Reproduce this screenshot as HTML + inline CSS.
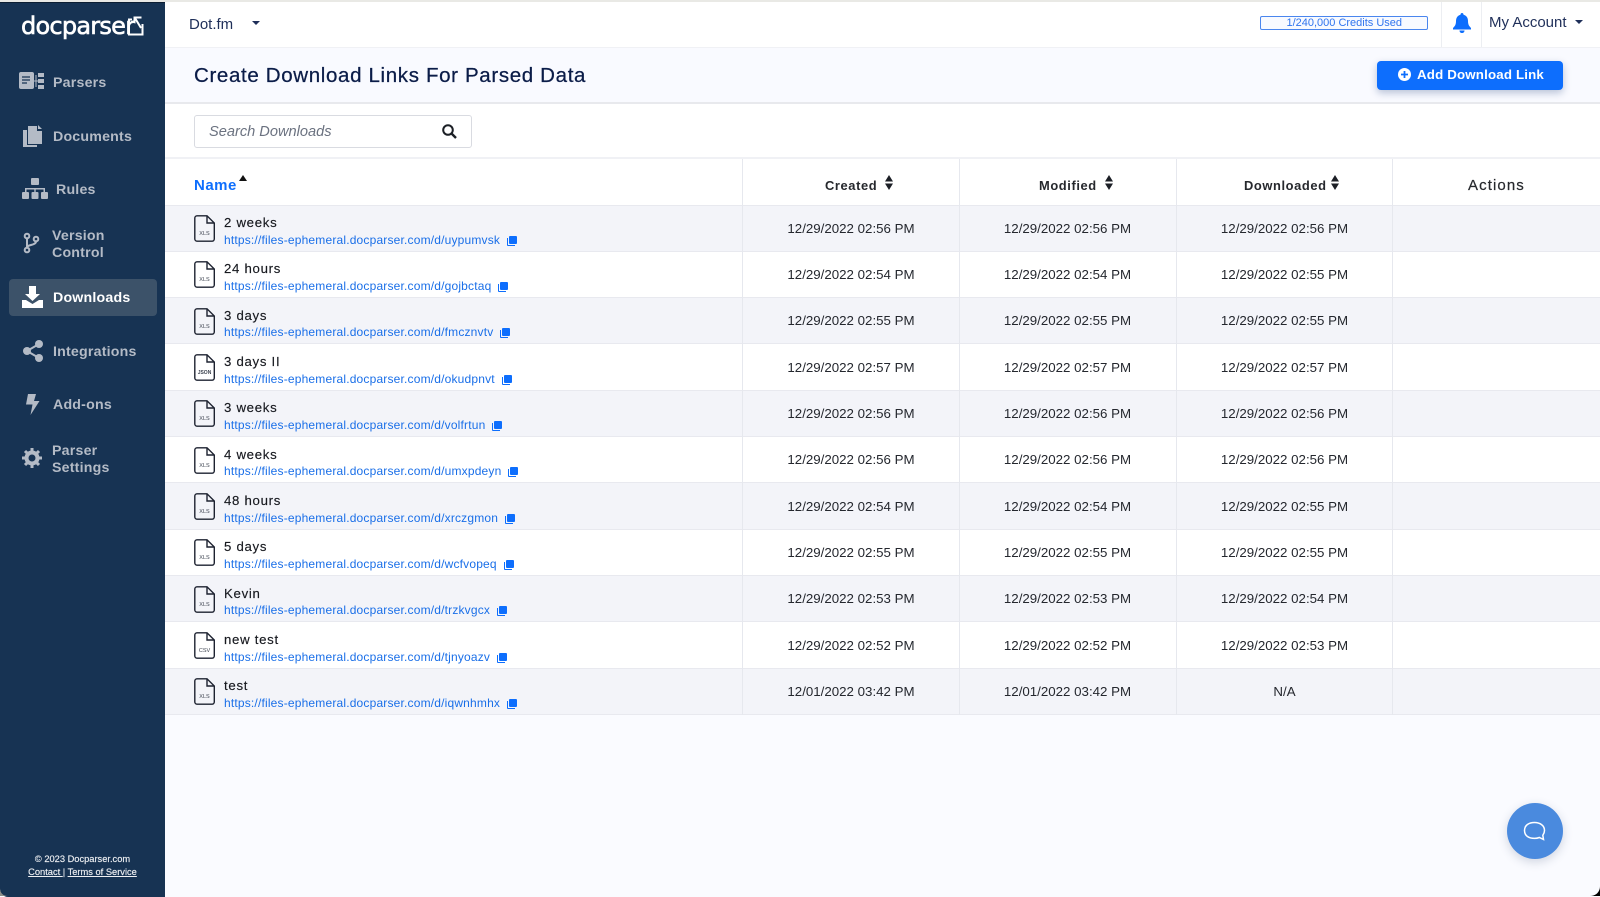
<!DOCTYPE html>
<html><head><meta charset="utf-8"><title>Docparser</title>
<style>
*{box-sizing:border-box}
html,body{margin:0;padding:0;width:1600px;height:896px;overflow:hidden;background:#fafbff;font-family:"Liberation Sans",sans-serif}
.a{position:absolute}
#strip{left:0;top:0;width:1600px;height:2px;background:#e9e9e5}
#side{left:0;top:1.5px;width:165px;height:895px;background:#173353;border-top:1px solid #0d1f33;border-bottom-left-radius:8px}
#top{left:165px;top:2px;width:1435px;height:46px;background:#fff;border-bottom:1px solid #f0f1f5}
#band{left:165px;top:48px;width:1435px;height:56px;background:#f9faff;border-bottom:2px solid #e8e9ed}
#sbar{left:165px;top:104px;width:1435px;height:55px;background:#fff;border-bottom:2px solid #f0f1f5}
.nav{position:absolute;color:#b4bbc6;font-size:14.2px;font-weight:bold;letter-spacing:.2px;line-height:17px;white-space:nowrap}
.ic{position:absolute}
#table{left:165px;top:159px;width:1435px}
.h{position:relative;height:46.5px;background:#fff;border-bottom:1px solid #e8e9ef}
.r{position:relative;height:46.32px;border-bottom:1.5px solid #e8e9ef;background:#fff}
.r:nth-child(even){background:#f3f4f9}
.v{position:absolute;top:0;bottom:0;width:1px;background:#e6e8ee}
.n{position:absolute;left:59px;top:8.5px;font-size:13.2px;letter-spacing:.72px;color:#17191f;line-height:17px;white-space:nowrap;-webkit-text-stroke:.15px #17191f}
.l{position:absolute;left:59px;top:26.3px;font-size:12px;letter-spacing:.18px;color:#1a6fe8;line-height:17px;white-space:nowrap}
.l svg{margin-left:7px;vertical-align:-2px}
.f{position:absolute;left:28.5px;top:9.5px}
.d{position:absolute;width:213px;text-align:center;top:14.2px;font-size:13.3px;color:#24272e;line-height:17px;white-space:nowrap}
.d1{left:579.5px}.d2{left:796px}.d3{left:1013px}
.th{position:absolute;top:18px;font-size:12.9px;font-weight:bold;letter-spacing:.6px;color:#26282d;line-height:18px;white-space:nowrap}
</style></head><body>
<div class="a" id="strip"></div>
<div class="a" id="top"></div>
<div class="a" id="band"></div>
<div class="a" id="sbar"></div>

<div class="a" id="side"></div>
<div class="a" style="left:21px;top:10px;color:#fff;font-family:'DejaVu Sans',sans-serif;font-size:24px;line-height:32px;letter-spacing:-.75px;white-space:nowrap;-webkit-text-stroke:.6px #fff">docparser</div>
<svg class="ic" style="left:127px;top:15px" width="17" height="21" viewBox="0 0 17 21" fill="none" stroke="#fff" stroke-width="2"><path d="M5 4.500H2v15h13.500V9"/><path d="M7.500 8V2.500h7M8 3l6 10"/></svg>

<svg class="ic" style="left:19px;top:72px" width="26" height="18" viewBox="0 0 26 18"><rect width="15" height="17" rx="2" fill="#b4bbc6"/><path d="M3 5h8M3 8h8M3 11h5" stroke="#173353" stroke-width="1.2"/><path d="M19 1h6v4h-6zM19 7h6v4h-6zM19 13h6v4h-6z" fill="#b4bbc6"/><path d="M15 9h4M17 3v12" stroke="#b4bbc6" stroke-width="1"/></svg>
<div class="nav" style="left:53px;top:75px">Parsers</div>
<svg class="ic" style="left:22.5px;top:125px" width="20" height="22" viewBox="0 0 20 22"><path d="M5 1h9v5h5v13H5z" fill="#b4bbc6"/><path d="M15 0l4 4h-4z" fill="#b4bbc6"/><path d="M0 5h4v15h10v2H0z" fill="#b4bbc6"/></svg>
<div class="nav" style="left:53px;top:128.5px">Documents</div>
<svg class="ic" style="left:22px;top:178px" width="26" height="21" viewBox="0 0 26 21" fill="#b4bbc6"><rect x="9" y="0" width="8" height="7" rx="1"/><rect x="0" y="14" width="7" height="7" rx="1"/><rect x="9.5" y="14" width="7" height="7" rx="1"/><rect x="19" y="14" width="7" height="7" rx="1"/><path d="M3 14v-4h20v4h-1.500v-2.500H13.700V14h-1.400v-2.500H4.500V14z"/></svg>
<div class="nav" style="left:56px;top:181.500px">Rules</div>
<svg class="ic" style="left:23px;top:232px" width="17" height="22" viewBox="0 0 17 22" fill="none" stroke="#b4bbc6" stroke-width="2"><circle cx="4" cy="4" r="2.300"/><circle cx="4" cy="18" r="2.300"/><circle cx="13" cy="7" r="2.300"/><path d="M4 6.500v9M13 9.500c0 4-9 3-9 6"/></svg>
<div class="nav" style="left:52px;top:227.500px">Version<br>Control</div>
<div class="a" style="left:8.500px;top:279px;width:148px;height:37px;background:#3c5269;border-radius:4px"></div>
<svg class="ic" style="left:22px;top:286px" width="21" height="22" viewBox="0 0 21 22" fill="#fff"><path d="M7 0h7v8h4l-7.500 7L3 8h4z"/><path d="M0 14h4l6.500 4 6.500-4h4v8H0z"/></svg>
<div class="nav" style="left:53px;top:289.500px;color:#fff">Downloads</div>
<svg class="ic" style="left:22.500px;top:340px" width="20" height="22" viewBox="0 0 20 22" fill="#b4bbc6"><circle cx="4" cy="11" r="4"/><circle cx="16" cy="4" r="4"/><circle cx="16" cy="18" r="4"/><path d="M4 11L16 4M4 11l12 7" stroke="#b4bbc6" stroke-width="2"/></svg>
<div class="nav" style="left:53px;top:343.500px">Integrations</div>
<svg class="ic" style="left:25.500px;top:394px" width="14" height="21" viewBox="0 0 14 21" fill="#b4bbc6"><path d="M2 0h8L8 7h5.500L4.500 21l2-10.500H0z"/></svg>
<div class="nav" style="left:53px;top:396.500px">Add-ons</div>
<svg class="ic" style="left:21.500px;top:448px" width="20" height="20" viewBox="0 0 20 20" fill="none" stroke="#b4bbc6"><circle cx="10" cy="10" r="5.500" stroke-width="4"/><path d="M10 0v20M0 10h20M3 3l14 14M17 3L3 17" stroke-width="3" stroke-dasharray="3 14"/></svg>
<div class="nav" style="left:52px;top:442.500px">Parser<br>Settings</div>

<div class="a" style="left:165px;top:430px;width:19.500px;height:37px;background:#102b4e;border-radius:0 4px 4px 0"></div>
<svg class="ic" style="left:170px;top:441px" width="9" height="14" viewBox="0 0 9 14" fill="none" stroke="#fff" stroke-width="2.300"><path d="M7.500 1.500L2 7l5.500 5.500"/></svg>

<div class="a" style="left:0;top:853px;width:165px;text-align:center;color:#eef0f3;font-size:9.300px;line-height:13px;white-space:nowrap;-webkit-text-stroke:.15px #eef0f3">© 2023 Docparser.com</div>
<div class="a" style="left:0;top:866px;width:165px;text-align:center;color:#eef0f3;font-size:9.300px;line-height:13px;white-space:nowrap;-webkit-text-stroke:.15px #eef0f3"><u>Contact </u>| <u>Terms of Service</u></div>

<div class="a" style="left:189px;top:15.500px;font-size:15px;color:#1f2f59;line-height:18px">Dot.fm</div>
<div class="a" style="left:252px;top:20.500px;border:4px solid transparent;border-top:4.500px solid #1f2f59;border-bottom:0"></div>
<div class="a" style="left:1260px;top:16px;width:167.500px;height:14px;border:1.500px solid #4a86ee;border-radius:2px;background:#f8faff"></div>
<div class="a" style="left:1260.500px;top:15.500px;width:167.500px;text-align:center;font-size:11px;line-height:15px;color:#2f74ee;white-space:nowrap">1/240,000 Credits Used</div>
<div class="a" style="left:1441px;top:2px;width:1px;height:45px;background:#eceef2"></div>
<div class="a" style="left:1481px;top:2px;width:1px;height:45px;background:#eceef2"></div>
<svg class="ic" style="left:1453px;top:13px" width="18" height="20" viewBox="0 0 18 20" fill="#0d6efd"><path d="M9 0c1 0 1.500.7 1.500 1.700 3 .7 4.500 3.300 4.500 6.300 0 3.500 1 5 3 7v1.500H0V15c2-2 3-3.500 3-7 0-3 1.500-5.600 4.500-6.300C7.500.7 8 0 9 0z"/><path d="M6.500 17.500h5c0 1.500-1 2.500-2.500 2.500s-2.500-1-2.500-2.500z"/></svg>
<div class="a" style="left:1489px;top:14px;font-size:15px;color:#1f2f59;line-height:18px;white-space:nowrap">My Account</div>
<div class="a" style="left:1575px;top:20px;border:4px solid transparent;border-top:4px solid #1f2f59;border-bottom:0"></div>

<div class="a" style="left:194px;top:62.500px;font-size:20.500px;font-weight:500;letter-spacing:.65px;color:#0b1c48;line-height:26px;white-space:nowrap;-webkit-text-stroke:.25px #0b1c48">Create Download Links For Parsed Data</div>
<div class="a" style="left:1377px;top:60.500px;width:186px;height:29px;background:#0d6efd;border-radius:4px;box-shadow:0 3px 8px rgba(13,50,110,.28)"></div>
<svg class="ic" style="left:1398px;top:68px" width="13" height="13" viewBox="0 0 13 13"><circle cx="6.500" cy="6.500" r="6.500" fill="#fff"/><path d="M6.500 3v7M3 6.500h7" stroke="#0d6efd" stroke-width="1.800"/></svg>
<div class="a" style="left:1417px;top:66px;font-size:13.300px;font-weight:bold;letter-spacing:.17px;color:#fff;line-height:17px;white-space:nowrap">Add Download Link</div>

<div class="a" style="left:194px;top:114.500px;width:277.500px;height:33px;background:#fff;border:1px solid #d9dbe1;border-radius:3px"></div>
<div class="a" style="left:209px;top:122.500px;font-size:14.600px;font-style:italic;color:#6b7280;line-height:18px;white-space:nowrap">Search Downloads</div>
<svg class="ic" style="left:442px;top:124px" width="15" height="15" viewBox="0 0 15 15" fill="none" stroke="#1c2026" stroke-width="2"><circle cx="6" cy="6" r="4.800"/><path d="M9.500 9.500l4.500 4.500" stroke-width="2.400"/></svg>

<div class="a" id="table">
<div class="h">
<span class="th" style="left:29px;color:#0d6efd;font-size:15px;letter-spacing:.5px">Name</span>
<span class="a" style="left:74px;top:16px;border:4px solid transparent;border-bottom:6px solid #111;border-top:0"></span>
<span class="th" style="left:660px">Created</span>
<svg class="ic" style="left:720px;top:16px" width="8" height="15" viewBox="0 0 8 15" fill="#1c1f26"><path d="M4 0l4 6.500H0zM4 15L0 8.500h8z"/></svg>
<span class="th" style="left:874px">Modified</span>
<svg class="ic" style="left:940px;top:16px" width="8" height="15" viewBox="0 0 8 15" fill="#1c1f26"><path d="M4 0l4 6.500H0zM4 15L0 8.500h8z"/></svg>
<span class="th" style="left:1079px">Downloaded</span>
<svg class="ic" style="left:1166px;top:16px" width="8" height="15" viewBox="0 0 8 15" fill="#1c1f26"><path d="M4 0l4 6.500H0zM4 15L0 8.500h8z"/></svg>
<span class="th" style="left:1303px;font-size:15px;font-weight:normal;letter-spacing:1.100px;-webkit-text-stroke:.2px #26282d">Actions</span>
</div>
<div class="r"><svg class="f" width="21" height="27" viewBox="0 0 21 27" fill="none" stroke="#1d2230" stroke-width="1.400"><path d="M13 .8H3A2.300 2.300 0 0 0 .8 3v21A2.300 2.300 0 0 0 3 26.200h15a2.300 2.300 0 0 0 2.300-2.200V8z"/><path d="M13 1v7h7"/><text x="10.500" y="20" text-anchor="middle" font-family="Liberation Sans" font-size="5.500" fill="#3d4350" stroke="none">XLS</text></svg><div class="n">2 weeks</div><div class="l">https://files-ephemeral.docparser.com/d/uypumvsk<svg width="10" height="10" viewBox="0 0 10 10" fill="#0d6efd"><path d="M3 0h6a1 1 0 0 1 1 1v6a1 1 0 0 1-1 1H3a1 1 0 0 1-1-1V1a1 1 0 0 1 1-1z"/><path d="M1 2v7h7v1H1a1 1 0 0 1-1-1V2z"/></svg></div><div class="d d1">12/29/2022 02:56 PM</div><div class="d d2">12/29/2022 02:56 PM</div><div class="d d3">12/29/2022 02:56 PM</div></div>
<div class="r"><svg class="f" width="21" height="27" viewBox="0 0 21 27" fill="none" stroke="#1d2230" stroke-width="1.400"><path d="M13 .8H3A2.300 2.300 0 0 0 .8 3v21A2.300 2.300 0 0 0 3 26.200h15a2.300 2.300 0 0 0 2.300-2.200V8z"/><path d="M13 1v7h7"/><text x="10.500" y="20" text-anchor="middle" font-family="Liberation Sans" font-size="5.500" fill="#3d4350" stroke="none">XLS</text></svg><div class="n">24 hours</div><div class="l">https://files-ephemeral.docparser.com/d/gojbctaq<svg width="10" height="10" viewBox="0 0 10 10" fill="#0d6efd"><path d="M3 0h6a1 1 0 0 1 1 1v6a1 1 0 0 1-1 1H3a1 1 0 0 1-1-1V1a1 1 0 0 1 1-1z"/><path d="M1 2v7h7v1H1a1 1 0 0 1-1-1V2z"/></svg></div><div class="d d1">12/29/2022 02:54 PM</div><div class="d d2">12/29/2022 02:54 PM</div><div class="d d3">12/29/2022 02:55 PM</div></div>
<div class="r"><svg class="f" width="21" height="27" viewBox="0 0 21 27" fill="none" stroke="#1d2230" stroke-width="1.400"><path d="M13 .8H3A2.300 2.300 0 0 0 .8 3v21A2.300 2.300 0 0 0 3 26.200h15a2.300 2.300 0 0 0 2.300-2.200V8z"/><path d="M13 1v7h7"/><text x="10.500" y="20" text-anchor="middle" font-family="Liberation Sans" font-size="5.500" fill="#3d4350" stroke="none">XLS</text></svg><div class="n">3 days</div><div class="l">https://files-ephemeral.docparser.com/d/fmcznvtv<svg width="10" height="10" viewBox="0 0 10 10" fill="#0d6efd"><path d="M3 0h6a1 1 0 0 1 1 1v6a1 1 0 0 1-1 1H3a1 1 0 0 1-1-1V1a1 1 0 0 1 1-1z"/><path d="M1 2v7h7v1H1a1 1 0 0 1-1-1V2z"/></svg></div><div class="d d1">12/29/2022 02:55 PM</div><div class="d d2">12/29/2022 02:55 PM</div><div class="d d3">12/29/2022 02:55 PM</div></div>
<div class="r"><svg class="f" width="21" height="27" viewBox="0 0 21 27" fill="none" stroke="#1d2230" stroke-width="1.400"><path d="M13 .8H3A2.300 2.300 0 0 0 .8 3v21A2.300 2.300 0 0 0 3 26.200h15a2.300 2.300 0 0 0 2.300-2.200V8z"/><path d="M13 1v7h7"/><text x="10.500" y="20" text-anchor="middle" font-family="Liberation Sans" font-size="5" font-weight="bold" fill="#3d4350" stroke="none">JSON</text></svg><div class="n">3 days II</div><div class="l">https://files-ephemeral.docparser.com/d/okudpnvt<svg width="10" height="10" viewBox="0 0 10 10" fill="#0d6efd"><path d="M3 0h6a1 1 0 0 1 1 1v6a1 1 0 0 1-1 1H3a1 1 0 0 1-1-1V1a1 1 0 0 1 1-1z"/><path d="M1 2v7h7v1H1a1 1 0 0 1-1-1V2z"/></svg></div><div class="d d1">12/29/2022 02:57 PM</div><div class="d d2">12/29/2022 02:57 PM</div><div class="d d3">12/29/2022 02:57 PM</div></div>
<div class="r"><svg class="f" width="21" height="27" viewBox="0 0 21 27" fill="none" stroke="#1d2230" stroke-width="1.400"><path d="M13 .8H3A2.300 2.300 0 0 0 .8 3v21A2.300 2.300 0 0 0 3 26.200h15a2.300 2.300 0 0 0 2.300-2.200V8z"/><path d="M13 1v7h7"/><text x="10.500" y="20" text-anchor="middle" font-family="Liberation Sans" font-size="5.500" fill="#3d4350" stroke="none">XLS</text></svg><div class="n">3 weeks</div><div class="l">https://files-ephemeral.docparser.com/d/volfrtun<svg width="10" height="10" viewBox="0 0 10 10" fill="#0d6efd"><path d="M3 0h6a1 1 0 0 1 1 1v6a1 1 0 0 1-1 1H3a1 1 0 0 1-1-1V1a1 1 0 0 1 1-1z"/><path d="M1 2v7h7v1H1a1 1 0 0 1-1-1V2z"/></svg></div><div class="d d1">12/29/2022 02:56 PM</div><div class="d d2">12/29/2022 02:56 PM</div><div class="d d3">12/29/2022 02:56 PM</div></div>
<div class="r"><svg class="f" width="21" height="27" viewBox="0 0 21 27" fill="none" stroke="#1d2230" stroke-width="1.400"><path d="M13 .8H3A2.300 2.300 0 0 0 .8 3v21A2.300 2.300 0 0 0 3 26.200h15a2.300 2.300 0 0 0 2.300-2.200V8z"/><path d="M13 1v7h7"/><text x="10.500" y="20" text-anchor="middle" font-family="Liberation Sans" font-size="5.500" fill="#3d4350" stroke="none">XLS</text></svg><div class="n">4 weeks</div><div class="l">https://files-ephemeral.docparser.com/d/umxpdeyn<svg width="10" height="10" viewBox="0 0 10 10" fill="#0d6efd"><path d="M3 0h6a1 1 0 0 1 1 1v6a1 1 0 0 1-1 1H3a1 1 0 0 1-1-1V1a1 1 0 0 1 1-1z"/><path d="M1 2v7h7v1H1a1 1 0 0 1-1-1V2z"/></svg></div><div class="d d1">12/29/2022 02:56 PM</div><div class="d d2">12/29/2022 02:56 PM</div><div class="d d3">12/29/2022 02:56 PM</div></div>
<div class="r"><svg class="f" width="21" height="27" viewBox="0 0 21 27" fill="none" stroke="#1d2230" stroke-width="1.400"><path d="M13 .8H3A2.300 2.300 0 0 0 .8 3v21A2.300 2.300 0 0 0 3 26.200h15a2.300 2.300 0 0 0 2.300-2.200V8z"/><path d="M13 1v7h7"/><text x="10.500" y="20" text-anchor="middle" font-family="Liberation Sans" font-size="5.500" fill="#3d4350" stroke="none">XLS</text></svg><div class="n">48 hours</div><div class="l">https://files-ephemeral.docparser.com/d/xrczgmon<svg width="10" height="10" viewBox="0 0 10 10" fill="#0d6efd"><path d="M3 0h6a1 1 0 0 1 1 1v6a1 1 0 0 1-1 1H3a1 1 0 0 1-1-1V1a1 1 0 0 1 1-1z"/><path d="M1 2v7h7v1H1a1 1 0 0 1-1-1V2z"/></svg></div><div class="d d1">12/29/2022 02:54 PM</div><div class="d d2">12/29/2022 02:54 PM</div><div class="d d3">12/29/2022 02:55 PM</div></div>
<div class="r"><svg class="f" width="21" height="27" viewBox="0 0 21 27" fill="none" stroke="#1d2230" stroke-width="1.400"><path d="M13 .8H3A2.300 2.300 0 0 0 .8 3v21A2.300 2.300 0 0 0 3 26.200h15a2.300 2.300 0 0 0 2.300-2.200V8z"/><path d="M13 1v7h7"/><text x="10.500" y="20" text-anchor="middle" font-family="Liberation Sans" font-size="5.500" fill="#3d4350" stroke="none">XLS</text></svg><div class="n">5 days</div><div class="l">https://files-ephemeral.docparser.com/d/wcfvopeq<svg width="10" height="10" viewBox="0 0 10 10" fill="#0d6efd"><path d="M3 0h6a1 1 0 0 1 1 1v6a1 1 0 0 1-1 1H3a1 1 0 0 1-1-1V1a1 1 0 0 1 1-1z"/><path d="M1 2v7h7v1H1a1 1 0 0 1-1-1V2z"/></svg></div><div class="d d1">12/29/2022 02:55 PM</div><div class="d d2">12/29/2022 02:55 PM</div><div class="d d3">12/29/2022 02:55 PM</div></div>
<div class="r"><svg class="f" width="21" height="27" viewBox="0 0 21 27" fill="none" stroke="#1d2230" stroke-width="1.400"><path d="M13 .8H3A2.300 2.300 0 0 0 .8 3v21A2.300 2.300 0 0 0 3 26.200h15a2.300 2.300 0 0 0 2.300-2.200V8z"/><path d="M13 1v7h7"/><text x="10.500" y="20" text-anchor="middle" font-family="Liberation Sans" font-size="5.500" fill="#3d4350" stroke="none">XLS</text></svg><div class="n">Kevin</div><div class="l">https://files-ephemeral.docparser.com/d/trzkvgcx<svg width="10" height="10" viewBox="0 0 10 10" fill="#0d6efd"><path d="M3 0h6a1 1 0 0 1 1 1v6a1 1 0 0 1-1 1H3a1 1 0 0 1-1-1V1a1 1 0 0 1 1-1z"/><path d="M1 2v7h7v1H1a1 1 0 0 1-1-1V2z"/></svg></div><div class="d d1">12/29/2022 02:53 PM</div><div class="d d2">12/29/2022 02:53 PM</div><div class="d d3">12/29/2022 02:54 PM</div></div>
<div class="r"><svg class="f" width="21" height="27" viewBox="0 0 21 27" fill="none" stroke="#1d2230" stroke-width="1.400"><path d="M13 .8H3A2.300 2.300 0 0 0 .8 3v21A2.300 2.300 0 0 0 3 26.200h15a2.300 2.300 0 0 0 2.300-2.200V8z"/><path d="M13 1v7h7"/><text x="10.500" y="20" text-anchor="middle" font-family="Liberation Sans" font-size="5.500" fill="#3d4350" stroke="none">CSV</text></svg><div class="n">new test</div><div class="l">https://files-ephemeral.docparser.com/d/tjnyoazv<svg width="10" height="10" viewBox="0 0 10 10" fill="#0d6efd"><path d="M3 0h6a1 1 0 0 1 1 1v6a1 1 0 0 1-1 1H3a1 1 0 0 1-1-1V1a1 1 0 0 1 1-1z"/><path d="M1 2v7h7v1H1a1 1 0 0 1-1-1V2z"/></svg></div><div class="d d1">12/29/2022 02:52 PM</div><div class="d d2">12/29/2022 02:52 PM</div><div class="d d3">12/29/2022 02:53 PM</div></div>
<div class="r"><svg class="f" width="21" height="27" viewBox="0 0 21 27" fill="none" stroke="#1d2230" stroke-width="1.400"><path d="M13 .8H3A2.300 2.300 0 0 0 .8 3v21A2.300 2.300 0 0 0 3 26.200h15a2.300 2.300 0 0 0 2.300-2.200V8z"/><path d="M13 1v7h7"/><text x="10.500" y="20" text-anchor="middle" font-family="Liberation Sans" font-size="5.500" fill="#3d4350" stroke="none">XLS</text></svg><div class="n">test</div><div class="l">https://files-ephemeral.docparser.com/d/iqwnhmhx<svg width="10" height="10" viewBox="0 0 10 10" fill="#0d6efd"><path d="M3 0h6a1 1 0 0 1 1 1v6a1 1 0 0 1-1 1H3a1 1 0 0 1-1-1V1a1 1 0 0 1 1-1z"/><path d="M1 2v7h7v1H1a1 1 0 0 1-1-1V2z"/></svg></div><div class="d d1">12/01/2022 03:42 PM</div><div class="d d2">12/01/2022 03:42 PM</div><div class="d d3">N/A</div></div>
</div>
<div class="a v" style="left:742px;top:159px;height:556px;bottom:auto"></div>
<div class="a v" style="left:959px;top:159px;height:556px;bottom:auto"></div>
<div class="a v" style="left:1176px;top:159px;height:556px;bottom:auto"></div>
<div class="a v" style="left:1392px;top:159px;height:556px;bottom:auto"></div>

<div class="a" style="left:1507px;top:803px;width:56px;height:56px;border-radius:50%;background:#4a8ade;box-shadow:0 3px 10px rgba(40,60,100,.2)"></div>
<svg class="ic" style="left:1523px;top:821px" width="24" height="22" viewBox="0 0 24 22" fill="none" stroke="#fff" stroke-width="1.500"><path d="M11.500 1.500c5.500 0 10 3 10 8 0 2-.8 3.500-1.700 4.800l.7 4.200-4.200-2c-1.500.6-3 .9-4.800.9-5.500 0-10-2.500-10-7.900s4.500-8 10-8z"/></svg>

<svg class="ic" style="left:1590px;top:886px" width="10" height="10" viewBox="0 0 10 10"><path d="M10 0v10H0C6 10 10 6 10 0z" fill="#000"/></svg>
<svg class="ic" style="left:0;top:888px" width="8" height="8" viewBox="0 0 8 8"><path d="M0 0v8h8C3 8 0 5 0 0z" fill="#8d8d88"/></svg>
</body></html>
